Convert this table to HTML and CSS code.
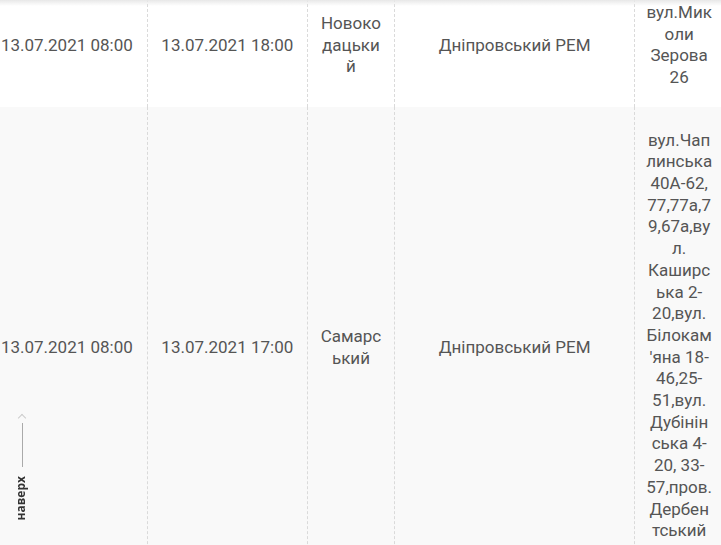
FILE: index.html
```html
<!DOCTYPE html>
<html lang="uk">
<head>
<meta charset="utf-8">
<title>Відключення</title>
<link rel="stylesheet" href="styles.css">
</head>
<body>
<div class="topshade"></div>
<div class="view">
  <table class="grid">
    <colgroup>
      <col class="c1"><col class="c2"><col class="c3"><col class="c4"><col class="c5">
    </colgroup>
    <tbody>
      <tr class="row odd">
        <td>13.07.2021 08:00</td>
        <td>13.07.2021 18:00</td>
        <td>Новокодацький</td>
        <td>Дніпровський РЕМ</td>
        <td class="addr">вул.Миколи Зерова 26</td>
      </tr>
      <tr class="row even">
        <td>13.07.2021 08:00</td>
        <td>13.07.2021 17:00</td>
        <td>Самарський</td>
        <td>Дніпровський РЕМ</td>
        <td class="addr long">вул.Чап<br>линська<br>40А-62,<br>77,77а,7<br>9,67а,ву<br>л.<br>Каширс<br>ька 2-<br>20,вул.<br>Білокам<br>'яна 18-<br>46,25-<br>51,вул.<br>Дубінін<br>ська 4-<br>20, 33-<br>57,пров.<br>Дербен<br>тський</td>
      </tr>
    </tbody>
  </table>
</div>
<a class="totop" href="#">
  <span class="chev"></span>
  <span class="bar"></span>
  <span class="label">наверх</span>
</a>
</body>
</html>
```
FILE: styles.css
```css
html, body {
  margin: 0;
  padding: 0;
  background: #f9f9f9;
  overflow: hidden;
}
body {
  font-family: Roboto, "Noto Sans", sans-serif;
  color: #555;
  width: 721px;
  height: 545px;
}
.topshade {
  position: fixed;
  left: 0;
  top: 0;
  width: 100%;
  height: 6px;
  background: linear-gradient(#e8e8e8, rgba(255,255,255,0));
  z-index: 2;
}
.view {
  margin-top: -16px;
  margin-left: -13px;
}
.grid {
  border-collapse: collapse;
  table-layout: fixed;
  width: 736px;
  font-size: 17px;
  line-height: 21.7px;
}
.c1 { width: 160px; }
.c2 { width: 160px; }
.c3 { width: 87px; }
.c4 { width: 240px; }
.c5 { width: 88px; }
.grid td {
  text-align: center;
  vertical-align: middle;
  padding: 18px 10px;
  overflow-wrap: break-word;
  border-left: 1px dashed #dadada;
}
.grid td:first-child { border-left: none; }
.grid td.addr {
  padding-left: 10.5px;
  padding-right: 10.5px;
}
.grid td.long {
  padding-bottom: 42px;
}
.odd { background: #fff; }
.even { background: #f9f9f9; height: 482px; }
.totop {
  position: fixed;
  left: 10px;
  top: 409px;
  width: 24px;
  display: flex;
  flex-direction: column;
  align-items: center;
  text-decoration: none;
}
.chev {
  width: 5px;
  height: 5px;
  border-left: 1px solid #ccc;
  border-top: 1px solid #ccc;
  transform: rotate(45deg);
  margin-top: 6px;
}
.bar {
  width: 1px;
  height: 44px;
  background: #aaa;
  margin-top: 2px;
}
.label {
  writing-mode: vertical-rl;
  transform: rotate(180deg);
  font-family: "Open Sans", sans-serif;
  font-weight: 700;
  font-size: 12px;
  color: #333;
  margin-top: 9px;
  margin-right: 4px;
}
```
